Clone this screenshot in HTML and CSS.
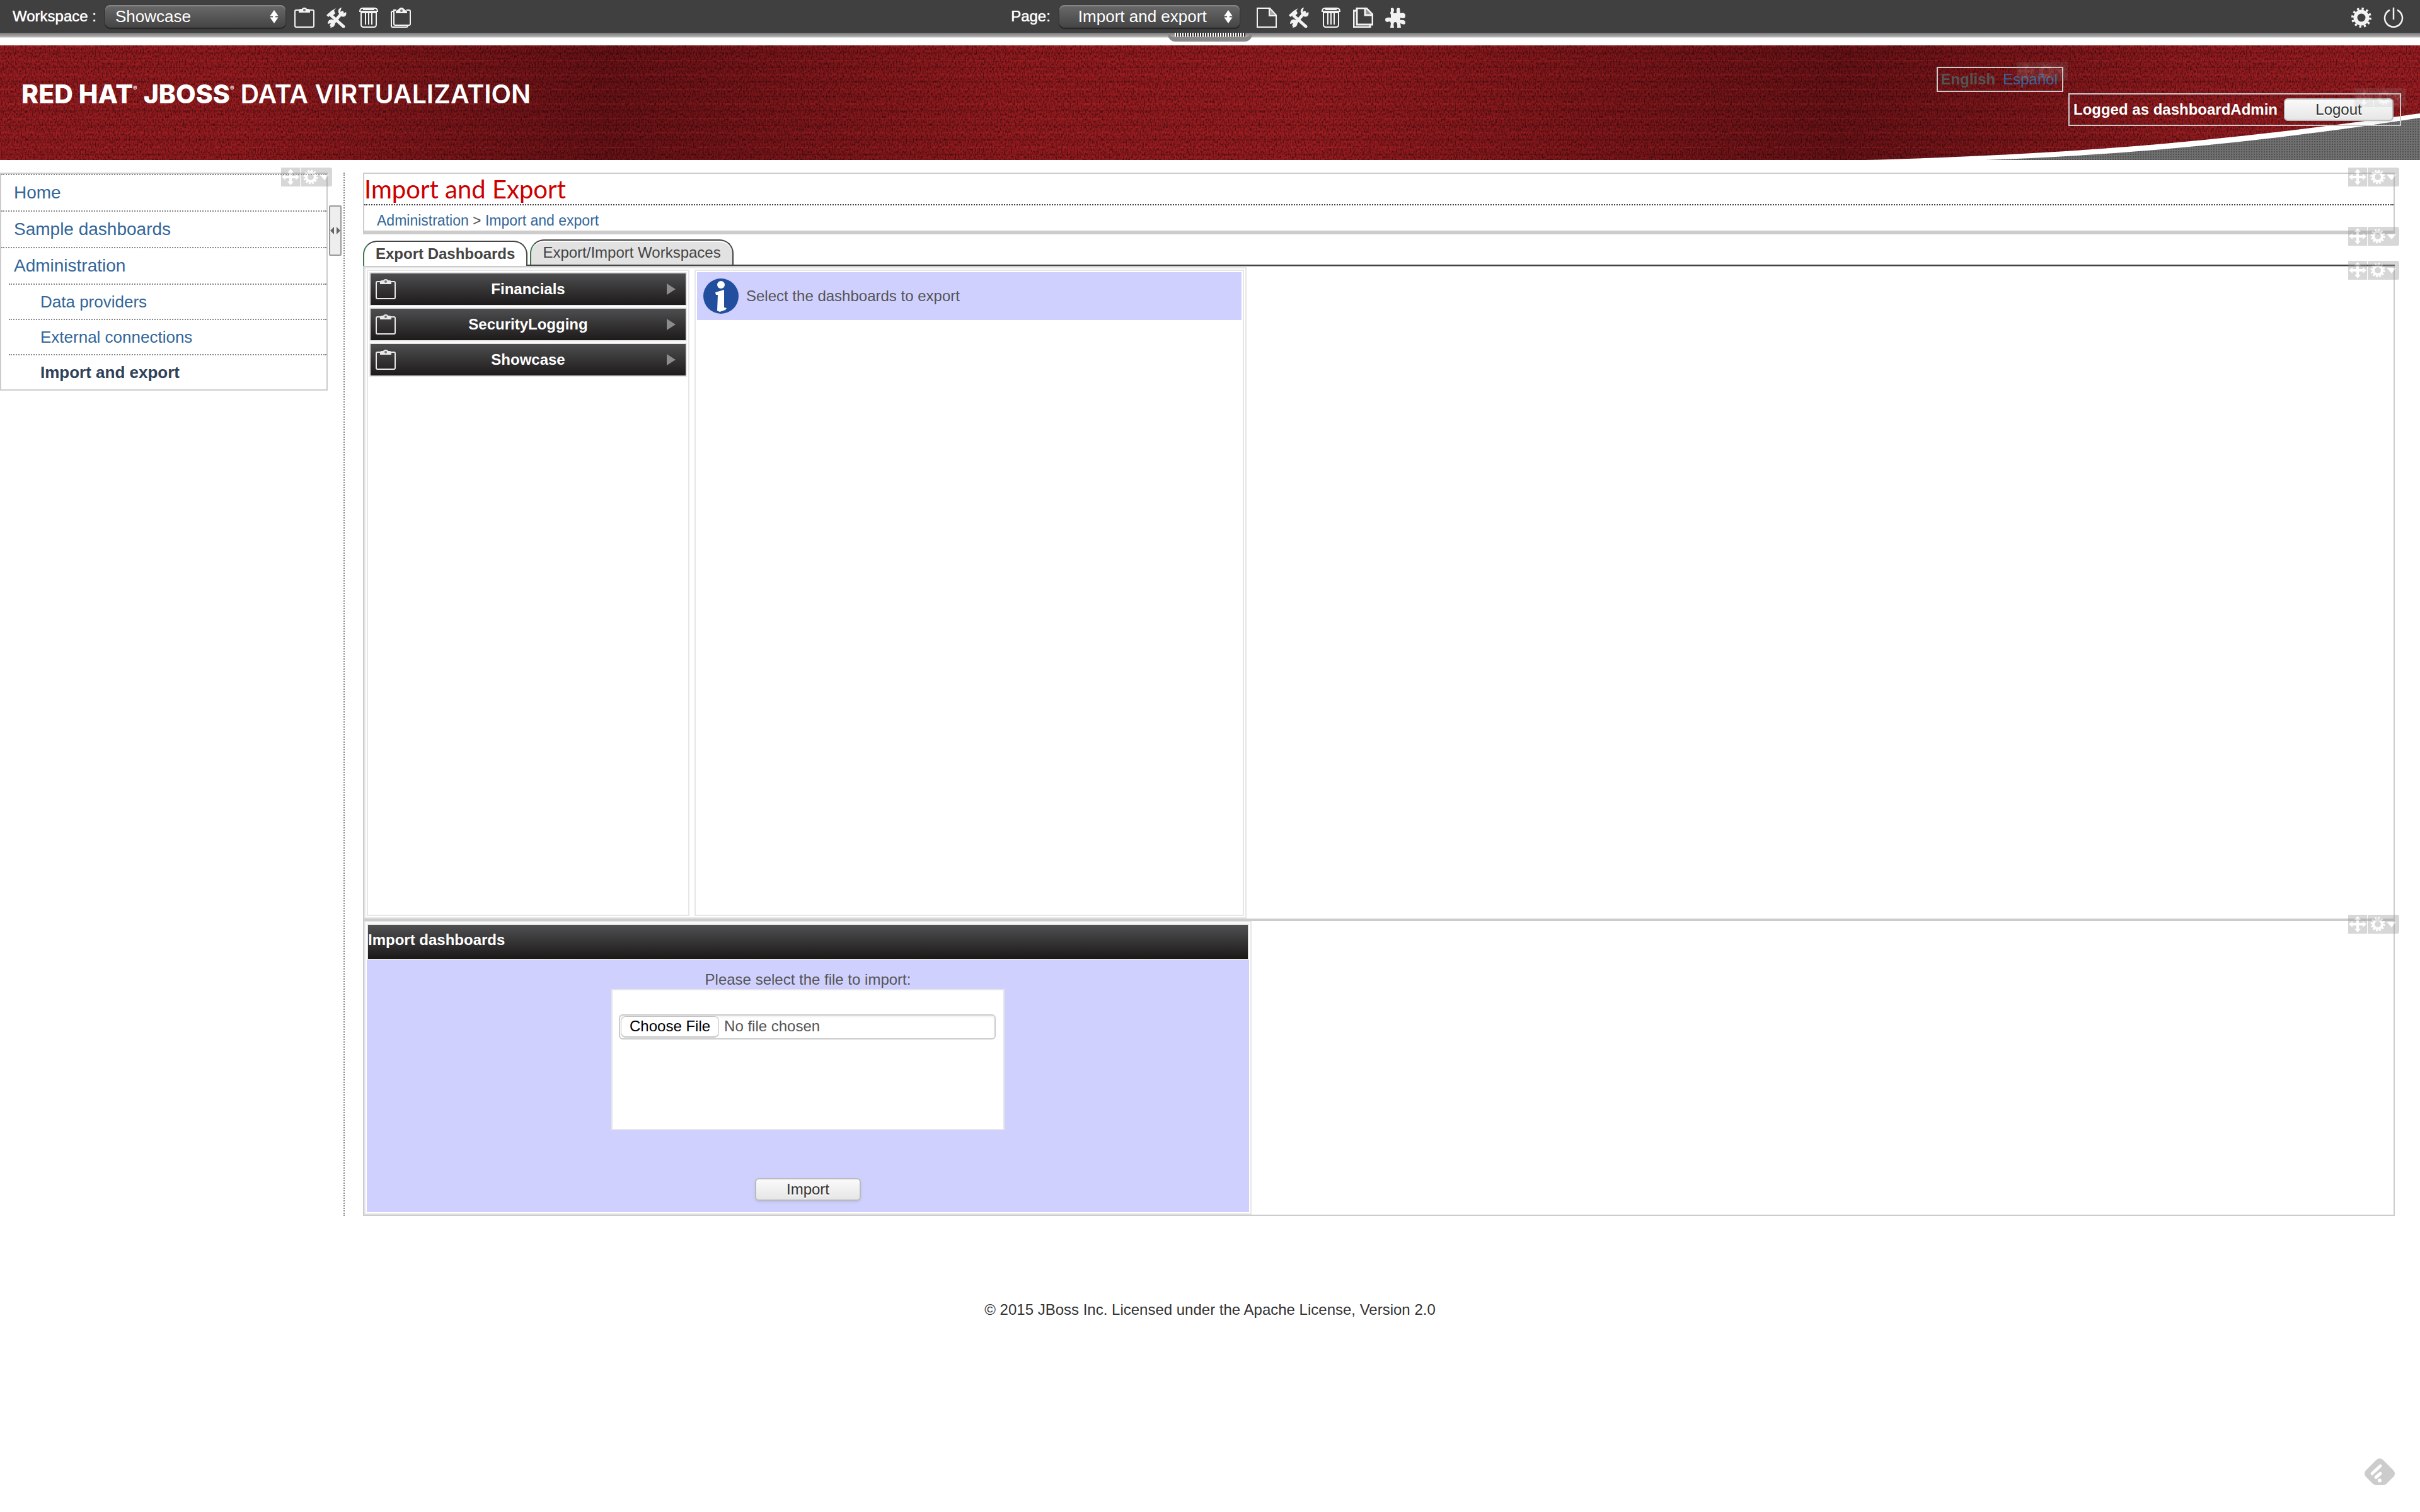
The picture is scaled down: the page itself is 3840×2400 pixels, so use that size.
FILE: index.html
```html
<!DOCTYPE html>
<html lang="en">
<head>
<meta charset="utf-8">
<title>Import and Export</title>
<link rel="stylesheet" href="styles.css">
</head>
<body>
<svg class="sprite" aria-hidden="true">
  <symbol id="clipboard" viewBox="0 0 32 32">
    <path d="M9 4H3Q1 4 1 6V29Q1 31 3 31H29Q31 31 31 29V6Q31 4 29 4H23" fill="none" stroke="currentColor" stroke-width="2"/>
    <path d="M7 8V5Q7 2 10 2H12Q13 0 16 0T20 2H22Q25 2 25 5V8Z" fill="currentColor"/><circle cx="16" cy="4" r="2" fill="#777"/>
  </symbol>
  <symbol id="tools" viewBox="0 0 32 32">
    <path d="M8 13 27 30M8 28 25 8" stroke="currentColor" stroke-width="5" stroke-linecap="round"/>
    <path d="M0 12 8 5 15 1 12 5 14 9 8 15 6 12 3 15Z" fill="currentColor"/>
    <path d="M24 0 22 6 26 10 31 7C33 13 28 17 22 13L19 8C18 3 20 1 24 0ZM5 20 6 25 2 26C2 19 9 16 13 22 15 27 12 32 6 32L9 27 5 24Z" fill="currentColor"/>
  </symbol>
  <symbol id="trash" viewBox="0 0 32 32">
    <path d="M2 6Q2 1 7 1H25Q30 1 30 6ZM4 8H28V27Q28 31 24 31H8Q4 31 4 27ZM11 9V27M16 9V27M21 9V27" fill="none" stroke="currentColor" stroke-width="2"/>
    <path d="M1 6H31M7 3H25" stroke="currentColor" stroke-width="2"/>
  </symbol>
  <symbol id="paste" viewBox="0 0 32 32">
    <path d="M9 4H5V26Q5 28 7 28H29Q31 28 31 26V6Q31 4 29 4H25M5 6H3Q1 6 1 8V29Q1 31 3 31H25Q27 31 27 28" fill="none" stroke="currentColor" stroke-width="2"/>
    <path d="M8 9V6L12 3Q14 0 17 0T22 3L26 6V9Z" fill="currentColor"/><circle cx="17" cy="5" r="2" fill="#777"/>
  </symbol>
  <symbol id="page" viewBox="0 0 32 32">
    <path d="M1 1H21L31 12V31H1ZM20 1V13H31" fill="none" stroke="currentColor" stroke-width="2"/><path d="M21 2 30 12H21Z" fill="currentColor" opacity=".6"/>
  </symbol>
  <symbol id="pages" viewBox="0 0 32 32">
    <path d="M6 1H21L31 11V27H6ZM19 1V12H31M6 5H1V31H27V27" fill="none" stroke="currentColor" stroke-width="3"/><path d="M19 2 30 12H19Z" fill="currentColor" opacity=".5"/>
  </symbol>
  <symbol id="puzzle" viewBox="0 0 32 32">
    <path d="M9 1Q14 -1 14 4L13 9H18L18 4Q18 -1 23 1L24 9Q32 7 32 13T24 16V20Q32 19 32 24T24 25L25 32H19Q20 23 16 23T14 32H8L9 25Q8 20 4 23 0 23 0 19T9 16V11Q7 9 9 6Z" fill="currentColor"/>
  </symbol>
  <symbol id="gear" viewBox="0 0 32 32">
    <circle cx="16" cy="16" r="9.500" fill="none" stroke="currentColor" stroke-width="6"/>
    <circle cx="16" cy="16" r="14" fill="none" stroke="currentColor" stroke-width="4" stroke-dasharray="3.300 4.030"/>
  </symbol>
  <symbol id="power" viewBox="0 0 32 32">
    <path d="M10 4A14 14 0 1 0 22 4M16 0V19" fill="none" stroke="currentColor" stroke-width="2.500"/>
  </symbol>
  <symbol id="updown" viewBox="0 0 14 22">
    <path d="M7 0 14 10H9V12H14L7 22 0 12H5V10H0Z" fill="currentColor"/>
  </symbol>
  <symbol id="handle" viewBox="0 0 81 30">
    <path d="M0 0H30V30H0ZM31 0H78Q81 0 81 3V27Q81 30 78 30H31Z" fill="#999"/>
    <path d="M15 2 20 8H17V13H23V10L29 15 23 20V17H17V22H20L15 28 10 22H13V17H7V20L1 15 7 10V13H13V8H10Z" fill="#fff"/>
    <circle cx="47" cy="15" r="7" fill="none" stroke="#fff" stroke-width="4"/>
    <circle cx="47" cy="15" r="10" fill="none" stroke="#fff" stroke-width="3" stroke-dasharray="2.800 2.436"/>
    <path d="M61 11H76L69 20Z" fill="#fff"/>
  </symbol>
</svg>

<div class="topbar">
  <div class="tools">
    <label for="workspace">Workspace :</label>
    <span class="picker"><select id="workspace" class="workspace-select"><option>Showcase</option></select><svg class="updown"><use href="#updown"/></svg></span>
    <button class="icon-button" aria-label="New workspace"><svg class="icon"><use href="#clipboard"/></svg></button>
    <button class="icon-button" aria-label="Edit workspace"><svg class="icon"><use href="#tools"/></svg></button>
    <button class="icon-button" aria-label="Delete workspace"><svg class="icon"><use href="#trash"/></svg></button>
    <button class="icon-button" aria-label="Duplicate workspace"><svg class="icon"><use href="#paste"/></svg></button>
  </div>
  <div class="tools">
    <label for="page">Page:</label>
    <span class="picker page-picker"><select id="page" class="page-select"><option>Import and export</option></select><svg class="updown"><use href="#updown"/></svg></span>
    <button class="icon-button" aria-label="New page"><svg class="icon"><use href="#page"/></svg></button>
    <button class="icon-button" aria-label="Edit page"><svg class="icon"><use href="#tools"/></svg></button>
    <button class="icon-button" aria-label="Delete page"><svg class="icon"><use href="#trash"/></svg></button>
    <button class="icon-button" aria-label="Duplicate page"><svg class="icon"><use href="#pages"/></svg></button>
    <button class="icon-button" aria-label="Add panel"><svg class="icon"><use href="#puzzle"/></svg></button>
  </div>
  <div class="tools tools-end">
    <button class="icon-button" aria-label="Settings"><svg class="icon"><use href="#gear"/></svg></button>
    <button class="icon-button" aria-label="Exit"><svg class="icon"><use href="#power"/></svg></button>
  </div>
  <div class="grip"></div>
</div>

<header class="banner">
  <svg class="cloth" aria-hidden="true">
    <filter id="weave" x="0" y="0" width="100%" height="100%">
      <feTurbulence type="fractalNoise" baseFrequency="0.45 0.25" numOctaves="2" seed="4"/>
      <feColorMatrix values="0 0 0 0 0  0 0 0 0 0  0 0 0 0 0  2.5 0 0 0 -1"/>
    </filter>
    <rect width="100%" height="100%" filter="url(#weave)"/>
  </svg>
  <svg class="swoosh" viewBox="0 0 900 182" aria-hidden="true">
    <defs><pattern id="dots" width="4" height="4" patternUnits="userSpaceOnUse"><rect width="4" height="4" fill="#707070"/><rect width="2" height="2" fill="#505050"/></pattern></defs>
    <path d="M20 182C380 172 600 150 900 108V182Z" fill="#fff"/>
    <path d="M210 182C430 174 640 155 900 115V182Z" fill="url(#dots)"/>
  </svg>
  <h1 class="brand"><b>RED HAT<sup>®</sup></b><b>JBOSS<sup>®</sup></b><span>DATA VIRTUALIZATION</span></h1>
  <div class="panel languages"><b>English</b><a href="#es">Español</a><svg class="handle"><use href="#handle"/></svg></div>
  <div class="panel session"><b>Logged as dashboardAdmin</b><button class="button logout">Logout</button><svg class="handle"><use href="#handle"/></svg></div>
</header>

<div class="columns">
  <aside class="side">
    <nav class="menu">
      <a href="#home">Home</a>
      <a href="#samples">Sample dashboards</a>
      <a href="#admin">Administration</a>
      <div class="submenu">
        <a href="#providers">Data providers</a>
        <a href="#connections">External connections</a>
        <a href="#import" class="current">Import and export</a>
      </div>
      <svg class="handle"><use href="#handle"/></svg>
    </nav>
    <button class="splitter" aria-label="Collapse menu"><svg viewBox="0 0 16 12"><path d="M6 0V12L0 6ZM10 0V12L16 6Z" fill="#666"/></svg></button>
  </aside>

  <main class="content">
    <section class="region heading">
      <h2>Import and Export</h2>
      <p class="crumbs"><a href="#admin">Administration</a> &gt; <a href="#import">Import and export</a></p>
      <svg class="handle"><use href="#handle"/></svg>
    </section>
    <section class="tabs">
      <button class="tab active">Export Dashboards</button>
      <div class="tab-rest"><button class="tab">Export/Import Workspaces</button></div>
      <svg class="handle"><use href="#handle"/></svg>
    </section>
    <section class="region">
      <div class="export">
        <div class="cell list">
          <button class="entry"><svg class="icon"><use href="#clipboard"/></svg><span>Financials</span><i></i></button>
          <button class="entry"><svg class="icon"><use href="#clipboard"/></svg><span>SecurityLogging</span><i></i></button>
          <button class="entry"><svg class="icon"><use href="#clipboard"/></svg><span>Showcase</span><i></i></button>
        </div>
        <div class="cell">
          <p class="notice"><svg class="info" viewBox="0 0 56 56" aria-hidden="true"><circle cx="28" cy="28" r="28" fill="#214f9e"/><circle cx="28" cy="10" r="6" fill="#fff"/><path d="M19 22 33 18V46L37 47 35 50 26 53 22 51 23 26 20 26Z" fill="#fff"/></svg>Select the dashboards to export</p>
        </div>
      </div>
      <svg class="handle"><use href="#handle"/></svg>
    </section>
    <section class="region">
      <form class="import">
        <h3>Import dashboards</h3>
        <div class="import-body">
          <label for="file">Please select the file to import:</label>
          <div class="cell file-cell"><input type="file" id="file"></div>
          <button type="button" class="button">Import</button>
        </div>
      </form>
      <svg class="handle"><use href="#handle"/></svg>
    </section>
  </main>
</div>

<footer class="footer">© 2015 JBoss Inc. Licensed under the Apache License, Version 2.0</footer>
<svg class="reader" viewBox="0 0 48 42" aria-hidden="true"><path d="M19 2Q24 -2 29 2L46 19Q50 24 46 29L34 41Q32 42 30 42H18Q16 42 14 41L2 29Q-2 24 2 19Z" fill="#ccc"/><path d="M12 24 25 12M18 30 25 24" stroke="#fff" stroke-width="5" stroke-linecap="round"/><circle cx="24" cy="35" r="3" fill="#fff"/></svg>
</body>
</html>
```
FILE: styles.css
```css
* { box-sizing: border-box; }
body { margin: 0; background: #fff; color: #555; font: 24px/30px "Liberation Sans", Arial, sans-serif; }
h1, h2, h3, p { margin: 0; }
button, select, input { font: inherit; color: inherit; margin: 0; }
a { color: #369; text-decoration: none; }
.sprite { position: absolute; width: 0; height: 0; }
.icon { display: block; width: 32px; height: 32px; }

/* Admin toolbar */
.topbar { position: relative; display: grid; grid-template-columns: 1fr auto 1fr; align-items: center; height: 60px; padding: 0 26px 8px 20px; color: #fff; text-shadow: 0 0 1px #fff; background: linear-gradient(#404040 52px, #777 52px, #aaa 58px, #eee 60px); }
.tools { display: flex; align-items: center; gap: 19px; }
.tools-end { justify-content: flex-end; }
.tools label { margin-right: -5px; }
.icon-button { flex: none; padding: 4px 0 0; border: 0; background: none; color: #f2f2f2; }
.picker { position: relative; display: flex; margin-right: -5px; }
.page-picker { margin-right: 8px; }
.picker select { appearance: none; height: 36px; padding: 0 40px 0 16px; border: 0; border-radius: 8px; font-size: 26px; line-height: 34px; color: #fff; background: linear-gradient(#6a6a6a, #444); box-shadow: inset 0 2px 1px #888, 0 1px 2px #000; }
.workspace-select { width: 286px; }
.picker .page-select { width: 286px; padding: 0 40px 0 30px; }
.updown { position: absolute; right: 11px; top: 8px; width: 14px; height: 21px; pointer-events: none; }
.grip { position: absolute; left: 50%; top: 52px; width: 134px; height: 14px; margin-left: -67px; border: solid #888; border-width: 0 4px 7px; border-radius: 0 0 12px 12px; background: repeating-linear-gradient(90deg, #fff 0 2px, #333 2px 4px) content-box #404040; padding: 0 7px 1px; }

/* Banner */
.banner { position: relative; display: flex; align-items: flex-start; gap: 8px; height: 182px; margin-top: 12px; padding: 0 30px 0 34px; overflow: hidden; background: repeating-linear-gradient(rgba(255, 60, 60, .12) 0 2px, transparent 2px 11px, rgba(0, 0, 0, .12) 11px 13px, transparent 13px 23px), linear-gradient(90deg, #971c20, #951b1f 10%, #6a1216 25%, #951b1f 42%, #991c20 54%, #6a1216 76%, #921b1f 90%, #9b1d22); }
.cloth { position: absolute; inset: 0; width: 100%; height: 100%; opacity: .5; }
.swoosh { position: absolute; right: 0; bottom: 0; width: 900px; height: 182px; }
.brand { position: relative; display: flex; gap: 10px; margin: 52px auto 0 0; color: #fff; font: 600 41px/50px Inter, "Open Sans", sans-serif; }
.brand b { font-weight: 800; }
.brand sup { font-size: 10px; line-height: 10px; vertical-align: 20px; }
.panel { position: relative; display: flex; align-items: center; border: 2px solid #ccc; }
.languages { gap: 12px; height: 40px; margin-top: 34px; padding: 0 7px 0 5px; }
.session { gap: 10px; height: 52px; margin-top: 76px; padding: 0 10px 0 6px; color: #fff; }
.handle { position: absolute; right: -9px; top: -10px; width: 81px; height: 30px; opacity: .38; }
.banner .handle { opacity: .15; }

.button { width: 168px; height: 36px; padding: 0; border: 2px solid #bbb; border-radius: 6px; color: #333; line-height: 30px; text-shadow: 0 2px 0 #fff; background: linear-gradient(#fafafa, #e6e6e6); box-shadow: 0 2px 4px rgba(0, 0, 0, .1); }
.logout { width: 174px; }

/* Columns */
.columns { display: flex; gap: 29px; margin-top: 20px; padding-right: 40px; }
.side { display: flex; align-items: flex-start; gap: 2px; flex: 0 0 547px; border-right: 2px dotted #888; }
.menu { position: relative; width: 520px; border: 2px solid #ccc; font-size: 28px; }
.menu a { display: block; padding: 0 0 0 20px; border-top: 2px dotted #888; line-height: 56px; }
.submenu { padding-left: 12px; font-size: 26px; }
.submenu a { padding-left: 50px; line-height: 54px; }
.submenu .current { color: #2f4259; font-weight: bold; }
.splitter { display: flex; align-items: center; width: 20px; height: 80px; margin-top: 52px; padding: 0; border: 2px solid #999; border-radius: 2px; background: #eee; }
.splitter svg { width: 16px; height: 12px; }

.content { flex: 1; min-width: 0; }
.region { position: relative; border: 2px solid #ccc; }
.heading { border-bottom-width: 6px; }
.heading h2 { border-bottom: 2px dotted #444; color: #c00; font: 40px/48px Lato, sans-serif; }
.crumbs { padding: 8px 0 0 20px; font-size: 23px; line-height: 32px; }

.tabs { position: relative; display: flex; align-items: flex-end; height: 50px; }
.tabs .handle { right: -7px; top: -12px; }
.tab-rest { flex: 1; padding-left: 4px; border-bottom: 2px solid #444; }
.tab { display: block; height: 40px; padding: 0 18px; border: 2px solid #444; border-left-color: #3a7a4a; border-bottom: 0; border-radius: 22px 22px 0 0; color: #444; background: #e2e2e2; box-shadow: inset 0 2px 0 #fff; line-height: 32px; }
.tab.active { background: #fff; font-weight: bold; }

/* Export */
.export { display: grid; grid-template-columns: 512px 1fr; gap: 8px; width: 1400px; max-width: 100%; min-height: 1034px; padding: 2px; border: 2px solid #e6e6e6; }
.cell { padding: 2px; border: 2px solid #e6e6e6; }
.list { display: flex; flex-direction: column; gap: 2px; }
.entry { display: flex; align-items: center; height: 54px; padding: 0 16px 0 8px; border: 2px solid #e6e6e6; color: #fff; background: linear-gradient(#505052, #1b1818); background-origin: border-box; font-weight: bold; }
.entry .icon { color: #e8e8e8; }
.entry span { flex: 1; margin-right: 10px; }
.entry i { width: 0; border: solid transparent; border-width: 9px 0 9px 14px; border-left-color: #8b8b8b; }
.notice { display: flex; align-items: center; gap: 12px; height: 76px; padding-left: 10px; background: #d0d0ff; }
.info { width: 56px; height: 56px; }

/* Import */
.import { width: 1408px; max-width: 100%; padding: 2px; border: 2px solid #e6e6e6; }
.import h3 { height: 58px; border: 2px solid #e6e6e6; color: #fff; background: linear-gradient(#505052, #1b1818); font-size: 24px; line-height: 48px; }
.import-body { display: flex; flex-direction: column; align-items: center; padding: 16px 0 18px; background: #d0d0ff; }
.file-cell { width: 624px; height: 224px; margin-bottom: 76px; padding: 38px 12px 38px 10px; background: #fff; }
.file-cell input { display: block; width: 100%; height: 40px; border: 2px solid #ccc; border-radius: 6px; line-height: 34px; background: #fff; box-shadow: inset 0 2px 3px #eee; }
.file-cell input::file-selector-button { height: 34px; margin: 0 8px 0 1px; padding: 0 13px; border: 1px solid #c4c4c4; border-bottom-width: 2px; border-radius: 8px; color: #000; background: #fff; font: inherit; line-height: 30px; }

.footer { margin: 134px 0 40px; color: #333; text-align: center; }
.reader { position: fixed; right: 40px; bottom: 43px; width: 48px; height: 42px; }
```
